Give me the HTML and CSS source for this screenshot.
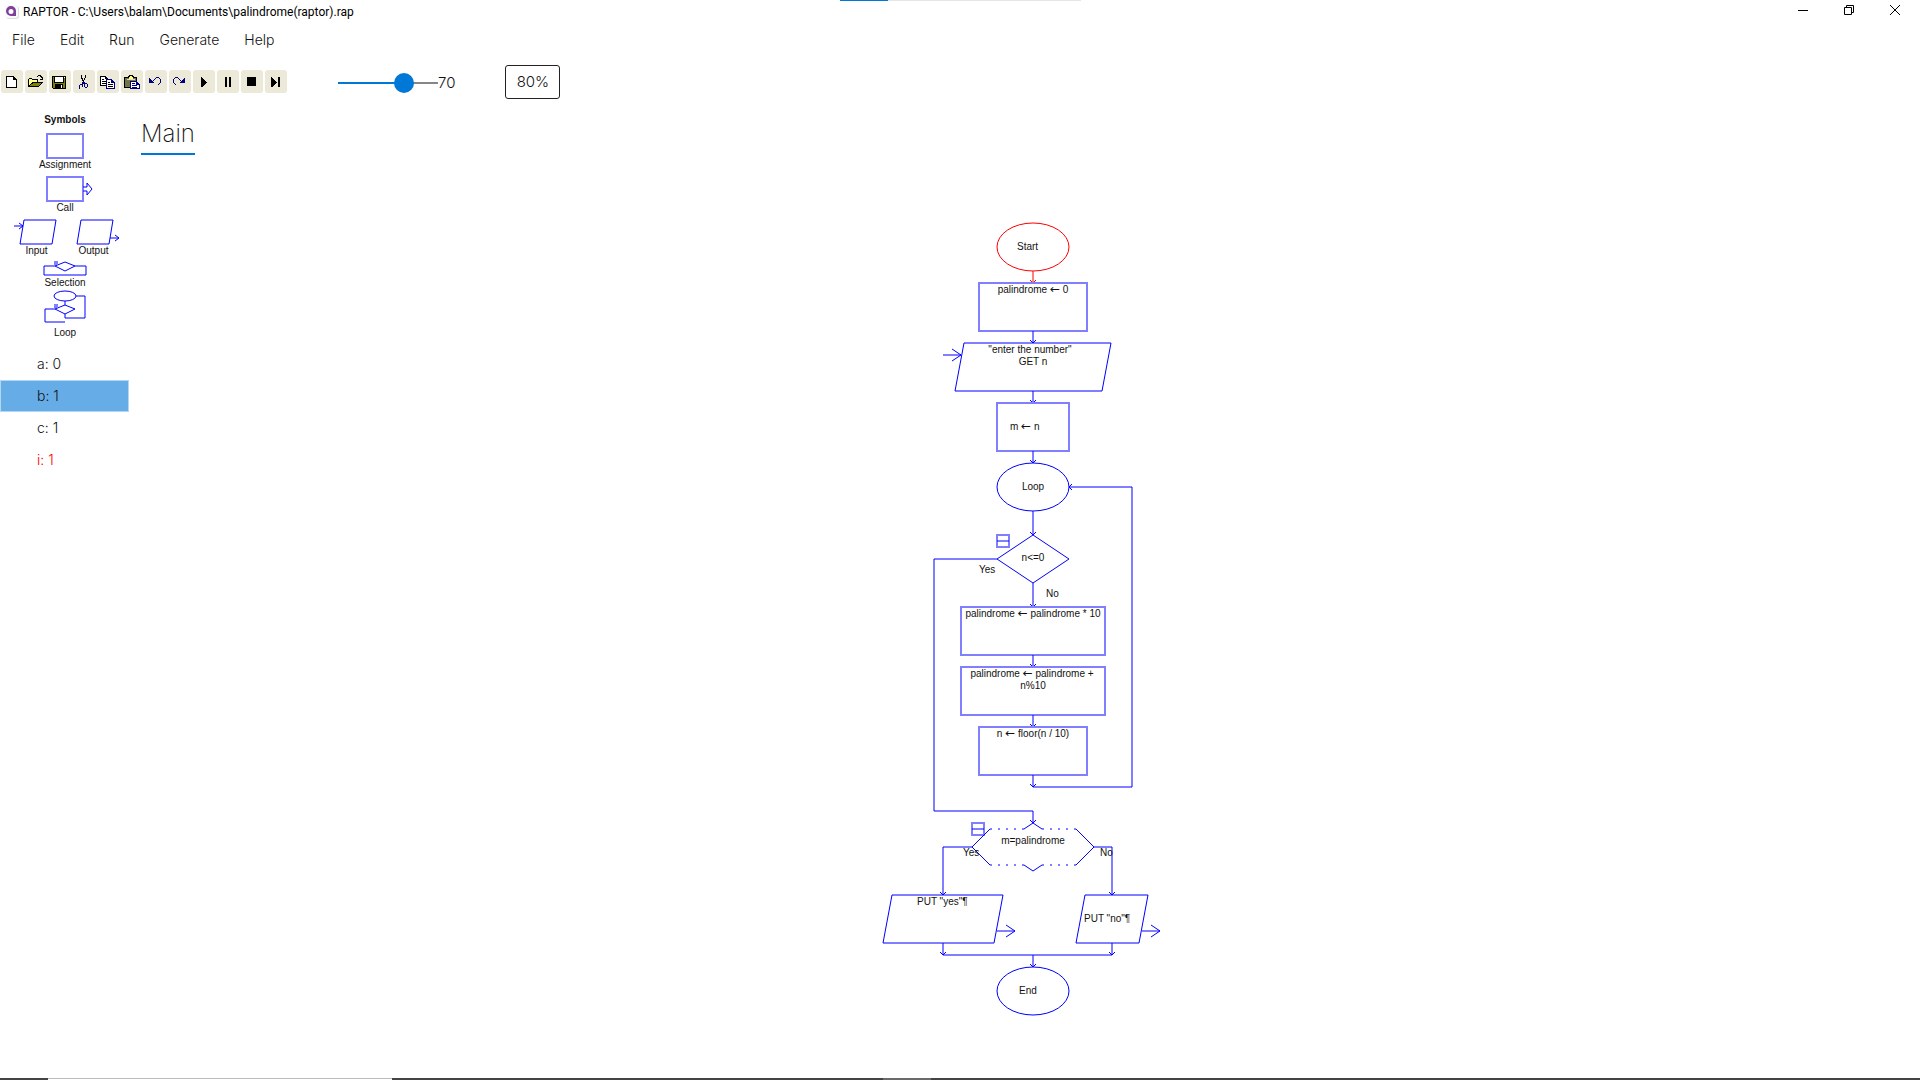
FILE: index.html
```html
<!DOCTYPE html>
<html lang="en">
<head>
<meta charset="utf-8">
<title>RAPTOR</title>
<link rel="stylesheet" href="styles.css">
</head>
<body>
<div class="progress"><div class="progress-value"></div></div>
<header class="titlebar">
  <svg class="app-icon" width="14" height="14" viewBox="0 0 14 14"><rect x="1" y="1" width="13" height="13" rx="3" fill="#ddd"/><rect width="13" height="13" rx="3" fill="#fafafa"/><path d="M6 1a5 5 0 1 0 0 10h5V6a5 5 0 0 0-5-5zM6 4a2 2 0 1 1 0 5 2 2 0 0 1 0-5z" fill="#7d3f98" fill-rule="evenodd"/></svg>
  <h1 class="title">RAPTOR - C:\Users\balam\Documents\palindrome(raptor).rap</h1>
  <div class="window-controls">
    <button class="win-btn" aria-label="Minimize"><svg width="12" height="12" viewBox="0 0 12 12"><path d="M1 6.500h10"/></svg></button>
    <button class="win-btn" aria-label="Restore"><svg width="12" height="12" viewBox="0 0 12 12"><path d="M1.500 3.500h7v7h-7zM3.500 3.500v-2h7v7h-2"/></svg></button>
    <button class="win-btn" aria-label="Close"><svg width="12" height="12" viewBox="0 0 12 12"><path d="M1 1l10 10M11 1L1 11"/></svg></button>
  </div>
</header>
<nav class="menu">
  <button>File</button><button>Edit</button><button>Run</button><button>Generate</button><button>Help</button>
</nav>
<div class="toolbar">
  <div class="tools">
    <button class="tool" aria-label="New"><svg viewBox="0 0 16 16"><path d="M2 2h8v1h1v1h1v1h1v9H2z"/><path fill="#fff" d="M3 3h6v3h3v7H3z"/></svg></button>
    <button class="tool" aria-label="Open"><svg viewBox="0 0 16 16"><path d="M9 2h1V1h3v1h1v1h1v3h-3V5h2V4h-1V3h-1V2h-2v1H9zM0 5h1V4h3v1h6v3h5v1h-1v1h-1v1h-1v1h-1v1H0z"/><path fill="#ff8" d="M1 5h3v1h5v2H4v1H3v1H2v1H1z"/><path fill="#808000" d="M5 9h8v1h-1v1h-1v1H2v-1h1v-1h2z"/></svg></button>
    <button class="tool" aria-label="Save"><svg viewBox="0 0 16 16"><path d="M0 2h14v13H1v-1H0z"/><path fill="#808000" d="M1 3h1v6h10V4h1v10h-2v-4H3v4H1z"/><path fill="#fff" d="M3 3h8v5H3zM9 11h1v3H9zM12 3h1v1h-1z"/></svg></button>
    <button class="tool" aria-label="Cut"><svg viewBox="0 0 16 16"><path d="M5 1h1v3h1v2h1V4h1V1h1v3H9v2H8v3H7V7H6V5H5z"/><path fill="#000080" d="M6 8h3v1h2v1h1v3h-1v1H9v-1H8v-3H7v3H6v1H4v1H3v-4h1v-1h2zM4 11v3h2v-3zM9 10v3h2v-3z" fill-rule="evenodd"/></svg></button>
    <button class="tool" aria-label="Copy"><svg viewBox="0 0 16 16"><path d="M0 2h6v1h1v1h1v8H0z"/><path fill="#fff" d="M1 3h4v2h2v6H1z"/><path d="M2 5h2v1H2zM2 7h4v1H2zM2 9h4v1H2z"/><path fill="#000080" d="M6 5h6v1h1v1h1v1h1v7H6z"/><path fill="#fff" d="M7 6h4v3h3v5H7z"/><path d="M8 8h2v1H8zM8 10h5v1H8zM8 12h5v1H8z"/></svg></button>
    <button class="tool" aria-label="Paste"><svg viewBox="0 0 16 16"><path d="M0 3h4V2h1V1h4v1h1v1h3v11H0z"/><path fill="#75754a" d="M1 4h11v9H1z"/><path fill="#ff6" d="M5 3h1V2h2v1h1v2H5z"/><path fill="#ddd" d="M3 5h8v1H3z"/><path fill="#000080" d="M6 7h7v1h1v1h1v1h1v5H6z"/><path fill="#fff" d="M7 8h5v3h3v3H7z"/><path d="M8 9h3v1H8zM8 11h5v1H8zM8 13h5v1H8z" fill="#000080"/></svg></button>
    <button class="tool" aria-label="Undo"><svg viewBox="0 0 16 16"><path fill="#000080" d="M1 4h1v1h1v1h1v1h1V6h1V5h1V4h1V3h3v1h1v1h1v4h-1v1h-1v1h-1v-1h1V9h1V5h-1V4H8v1H7v1H6v1H5v1h1v1H1z"/></svg></button>
    <button class="tool" aria-label="Redo"><svg viewBox="0 0 16 16"><path fill="#000080" d="M13 4h-1v1h-1v1h-1v1H9V6H8V5H7V4H6V3H3v1H2v1H1v4h1v1h1v1h1v-1H3V9H2V5h1V4h3v1h1v1h1v1h1v1H8v1h5z"/></svg></button>
    <button class="tool" aria-label="Run"><svg viewBox="0 0 16 16"><path d="M5 3h1v1h1v1h1v1h1v1h1v1h1v1h-1v1H9v1H8v1H7v1H5z"/></svg></button>
    <button class="tool" aria-label="Pause"><svg viewBox="0 0 16 16"><path d="M5 3h2v10H5zM9 3h2v10H9z"/></svg></button>
    <button class="tool" aria-label="Stop"><svg viewBox="0 0 16 16"><path d="M3 3h9v9H3z"/></svg></button>
    <button class="tool" aria-label="Step"><svg viewBox="0 0 16 16"><path d="M3 3h1v1h1v1h1v1h1v1h1v1h1v1H8v1H7v1H6v1H5v1H3zM10 3h2v10h-2z"/></svg></button>
  </div>
  <div class="speed">
    <input class="slider" id="speed" type="range" min="0" max="100" value="70" aria-label="Speed">
    <output for="speed">70</output>
  </div>
  <button class="zoom">80%</button>
</div>
<div class="workspace">
  <aside class="sidebar">
    <h2 class="palette-title">Symbols</h2>
    <figure class="symbol"><svg width="130" height="33" viewBox="0 0 130 33"><path class="box" d="M47 8h36v24H47z"/></svg><figcaption>Assignment</figcaption></figure>
    <figure class="symbol"><svg width="130" height="31" viewBox="0 0 130 31"><path class="box" d="M47 6h36v24H47z"/><path d="M83 16h4v-4l5 6-5 6v-4h-4"/></svg><figcaption>Call</figcaption></figure>
    <div class="symbol-row">
      <figure class="symbol"><svg width="57" height="31" viewBox="0 0 57 31"><path d="M16 6h32l-4 24H12zM6 12h9M11 9l4 3-4 3"/></svg><figcaption>Input</figcaption></figure>
      <figure class="symbol"><svg width="57" height="31" viewBox="0 0 57 31"><path d="M16 6h32l-4 24H12zM45 24h9M50 21l4 3-4 3"/></svg><figcaption>Output</figcaption></figure>
    </div>
    <figure class="symbol"><svg width="130" height="20" viewBox="0 0 130 20"><path d="M55 9l10-4 10 4-10 5zM55 9H44v9h42V9H75"/><path class="knob" d="M54 4h4v4h-4z"/></svg><figcaption>Selection</figcaption></figure>
    <figure class="symbol"><svg width="130" height="38" viewBox="0 0 130 38"><ellipse cx="65" cy="7" rx="11" ry="5"/><path d="M65 12v4M55 20l10-4 10 4-10 5zM76 7h9v22H65v-4M55 20H45v13h20"/><path class="knob" d="M54 15h4v4h-4z"/></svg><figcaption>Loop</figcaption></figure>
    <ul class="watch">
      <li>a: 0</li>
      <li class="selected">b: 1</li>
      <li>c: 1</li>
      <li class="changed">i: 1</li>
    </ul>
  </aside>
  <main class="editor">
    <div class="tabs" role="tablist"><button class="tab" role="tab" aria-selected="true">Main</button></div>
    <div class="canvas">
      <svg class="chart" width="300" height="805" viewBox="875 215 300 805">
        <defs>
          <path id="head" d="M-3-3L0 0l3-3"/>
          <g id="fold"><path class="box" d="M0 0h12v12H0z"/><path d="M0 6h12"/></g>
          <path id="out" d="M0 0h18M9-6l9 6-9 6"/>
        </defs>
        <g class="active"><ellipse cx="1033" cy="247" rx="36" ry="24"/><path d="M1033 271v12"/><use href="#head" x="1033" y="283"/></g>
        <path class="box" d="M979 283h108v48H979z"/><path d="M1033 331v12"/><use href="#head" x="1033" y="343"/>
        <path d="M964 343h147l-9 48H955zM1033 391v12"/><use href="#out" x="943" y="355"/><use href="#head" x="1033" y="403"/>
        <path class="box" d="M997 403h72v48h-72z"/><path d="M1033 451v12"/><use href="#head" x="1033" y="463"/>
        <ellipse cx="1033" cy="487" rx="36" ry="24"/>
        <path d="M1033 511v24M1033 787h99V487h-63M1072 484l-3 3 3 3"/><use href="#head" x="1033" y="535"/>
        <path d="M997 559l36-24 36 24-36 24zM1033 583v24"/><use href="#fold" x="997" y="535"/><use href="#head" x="1033" y="607"/>
        <path d="M997 559h-63v252h99v12"/><use href="#head" x="1033" y="823"/>
        <path class="box" d="M961 607h144v48H961z"/><path d="M1033 655v12"/><use href="#head" x="1033" y="667"/>
        <path class="box" d="M961 667h144v48H961z"/><path d="M1033 715v12"/><use href="#head" x="1033" y="727"/>
        <path class="box" d="M979 727h108v48H979z"/><path d="M1033 775v12"/><use href="#head" x="1033" y="787"/>
        <use href="#fold" x="972" y="823"/>
        <path d="M990 829l-18 18 18 18M1076 829l18 18-18 18M1024 829l9-6 9 6M1024 865l9 6 9-6"/>
        <path class="dots" d="M990 829h34M1042 829h34M990 865h34M1042 865h34"/>
        <path d="M972 847h-29v48M1094 847h18v48"/><use href="#head" x="943" y="895"/><use href="#head" x="1112" y="895"/>
        <path d="M892 895h111l-9 48H883zM943 943v12"/><use href="#out" x="997" y="931"/><use href="#head" x="943" y="955"/>
        <path d="M1085 895h63l-9 48h-63zM1112 943v12"/><use href="#out" x="1142" y="931"/><use href="#head" x="1112" y="955"/>
        <path d="M943 955h169M1033 955v12"/><use href="#head" x="1033" y="967"/>
        <ellipse cx="1033" cy="991" rx="36" ry="24"/>
        <g class="centered">
          <text x="1033" y="293">palindrome <tspan class="assign">←</tspan> 0</text>
          <text x="1030" y="353">"enter the number"</text>
          <text x="1033" y="365">GET n</text>
          <text x="1033" y="490">Loop</text>
          <text x="1033" y="561">n&lt;=0</text>
          <text x="1033" y="617">palindrome <tspan class="assign">←</tspan> palindrome * 10</text>
          <text x="1032" y="677">palindrome <tspan class="assign">←</tspan> palindrome +</text>
          <text x="1033" y="689">n%10</text>
          <text x="1033" y="737">n <tspan class="assign">←</tspan> floor(n / 10)</text>
          <text x="1033" y="844">m=palindrome</text>
        </g>
        <text x="1017" y="250">Start</text>
        <text x="1010" y="430">m <tspan class="assign">←</tspan> n</text>
        <text x="979" y="573">Yes</text>
        <text x="1046" y="597">No</text>
        <text x="963" y="856">Yes</text>
        <text x="1100" y="856">No</text>
        <text x="917" y="905">PUT "yes"¶</text>
        <text x="1084" y="922">PUT "no"¶</text>
        <text x="1019" y="994">End</text>
      </svg>
    </div>
  </main>
</div>
<footer class="taskbar"><span class="task-light"></span><span class="task-dark"></span><span class="task-mid"></span></footer>
</body>
</html>
```
FILE: styles.css
```css
* { box-sizing: border-box; }
body {
  margin: 0;
  min-height: 100vh;
  display: flex;
  flex-direction: column;
  background: #fff;
  color: #111;
  font: 300 14px/20px Inter, sans-serif;
}
button {
  margin: 0;
  padding: 0;
  border: 0;
  background: none;
  color: inherit;
  font: inherit;
}
.progress {
  align-self: center;
  width: 241px;
  height: 1px;
  background: #e5e5e5;
}
.progress-value { width: 20%; height: 1px; background: #0078d7; }
.titlebar {
  display: flex;
  align-items: center;
  gap: 4px;
  height: 21px;
  padding: 0 2px 0 5px;
}
.title {
  flex: 1;
  margin: 0;
  color: #000;
  font: 400 12px/20px Roboto, sans-serif;
}
.window-controls { display: flex; align-self: flex-start; }
.win-btn { width: 46px; height: 18px; line-height: 0; }
.win-btn svg { fill: none; stroke: #000; }
.menu {
  display: flex;
  gap: 25px;
  height: 36px;
  padding: 7px 12px;
}
.toolbar {
  display: flex;
  align-items: center;
  height: 47px;
  padding-left: 1px;
}
.tools { display: flex; gap: 2px; }
.tool {
  width: 22px;
  height: 23px;
  padding: 4px 3px 3px;
  border-radius: 3px;
  background: #ece9d8;
}
.tool svg {
  display: block;
  width: 16px;
  height: 16px;
  shape-rendering: crispEdges;
}
.speed {
  display: flex;
  align-items: center;
  margin-left: 51px;
  padding-top: 3px;
  font-size: 15px;
}
.slider {
  appearance: none;
  width: 100px;
  height: 20px;
  margin: 0;
  background: linear-gradient(90deg, #0078d7 66%, #868686 66%) center / 100% 2px no-repeat;
}
.slider::-webkit-slider-thumb {
  appearance: none;
  width: 20px;
  height: 20px;
  border-radius: 50%;
  background: #0078d7;
}
.zoom {
  width: 55px;
  height: 34px;
  margin-left: 50px;
  border: 1px solid #222;
  border-radius: 3px;
  font-size: 15px;
}
.workspace { display: flex; flex: 1; }
.sidebar { width: 130px; padding-top: 9px; }
.palette-title, .symbol {
  margin: 0;
  color: #111;
  font: 10px/12px "Liberation Sans", sans-serif;
  text-align: center;
}
.palette-title { font-weight: 700; }
.symbol svg {
  display: block;
  overflow: visible;
  fill: none;
  stroke: #00f;
}
.symbol .knob { fill: #8080ff; stroke: none; }
.box { stroke: #8080ff; stroke-width: 2; }
.symbol-row { display: flex; padding-left: 8px; }
.watch { margin: 9px 0 0; padding: 0; list-style: none; }
.watch li {
  width: 129px;
  height: 32px;
  padding-left: 36px;
  border: 1px solid transparent;
  line-height: 30px;
}
.watch .selected { background: #66ade7; border-color: #b3d6f3; }
.watch .changed { color: #f00; }
.editor { flex: 1; }
.tabs { display: flex; padding: 8px 11px 0; }
.tab {
  height: 42px;
  border-bottom: 2px solid #0078d7;
  font-size: 24px;
  font-weight: 200;
  line-height: 42px;
}
.canvas { display: flex; justify-content: center; padding-top: 60px; }
.chart { fill: none; stroke: #00f; }
.active { stroke: #f00; }
.dots { stroke-dasharray: 2 6; }
.chart text {
  fill: #111;
  stroke: none;
  font: 10px "Liberation Sans", sans-serif;
}
.chart .assign { font: 12px "DejaVu Sans", sans-serif; }
.centered { text-anchor: middle; }
.taskbar {
  display: flex;
  height: 2px;
  padding-left: 48px;
  background: #444;
}
.task-light { width: 344px; background: #fff; border-top: 1px solid #bbb; }
.task-dark { width: 491px; }
.task-mid { width: 48px; background: #6a6a6a; }
```
